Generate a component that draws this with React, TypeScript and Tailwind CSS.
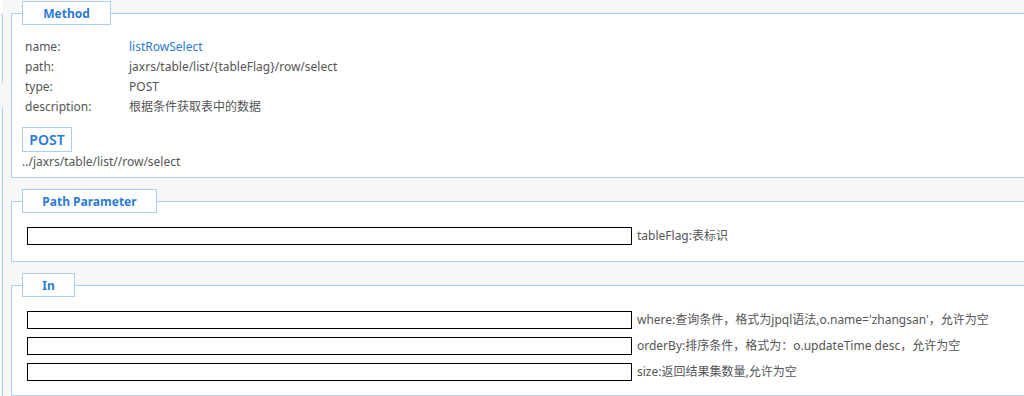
import React from 'react';

const font = { fontFamily: '"Noto Sans", "Noto Sans CJK SC", sans-serif' };

const Legend = ({ title, width }: { title: string; width: string }) => (
  <legend className={`h-[24px] ${width} border border-[#a8d0f5] bg-white`}>
    <div className="pt-[1px] text-center text-[12px] font-bold leading-[21px] text-[#2b7ad6]">{title}</div>
  </legend>
);

const ParamRow = ({ text }: { text: string }) => (
  <div className="flex h-[26px] items-center">
    <div className="h-[18px] w-[605px] shrink-0 border border-black bg-white" />
    <span className="ml-[5px] whitespace-nowrap text-[12px] text-[#555]">{text}</span>
  </div>
);

const rows = [
  { label: 'name:', value: 'listRowSelect', blue: true },
  { label: 'path:', value: 'jaxrs/table/list/{tableFlag}/row/select' },
  { label: 'type:', value: 'POST' },
  { label: 'description:', value: '根据条件获取表中的数据' },
];

export default function App() {
  return (
    <div className="flex h-[396px] w-[1024px] overflow-hidden bg-[#f7f7f7]" style={font}>
      <div className="flex w-[3px] shrink-0 flex-col bg-white">
        <div className="h-[13px] bg-white" />
        <div className="h-[70px] border-r border-[#a8d0f5] bg-[#f7f7f7]" />
        <div className="h-[24px] bg-[#f7f7f7]" />
        <div className="flex-1 border-r border-[#a8d0f5] bg-[#f7f7f7]" />
      </div>
      <div className="ml-[8px] flex w-[1100px] shrink-0 flex-col gap-[11px] pt-[1px]">
        <fieldset className="border border-[#a8d0f5] bg-white px-[10px] pb-[6px]">
          <Legend title="Method" width="w-[89px]" />
          <div className="mt-[12px] pl-[3px]">
            {rows.map((r) => (
              <div key={r.label} className="flex h-[20px] items-center text-[12px]">
                <span className="w-[104px] text-[#555]">{r.label}</span>
                <span className={r.blue ? 'text-[#2b7ad6]' : 'text-[#555]'}>{r.value}</span>
              </div>
            ))}
          </div>
          <div className="mt-[10px] flex h-[25px] w-[50px] items-center justify-center border border-[#a8d0f5] text-[14px] font-semibold text-[#2b7ad6]">
            POST
          </div>
          <div className="flex h-[19px] items-center text-[12px] text-[#555]">../jaxrs/table/list//row/select</div>
        </fieldset>
        <fieldset className="border border-[#a8d0f5] bg-white px-[10px] pb-[12px]">
          <Legend title="Path Parameter" width="w-[135px]" />
          <div className="mt-[10px] pl-[5px]">
            <ParamRow text="tableFlag:表标识" />
          </div>
        </fieldset>
        <fieldset className="flex-1 border border-[#a8d0f5] bg-white px-[10px]">
          <Legend title="In" width="w-[53px]" />
          <div className="mt-[10px] pl-[5px]">
            <ParamRow text="where:查询条件，格式为jpql语法,o.name='zhangsan'，允许为空" />
            <ParamRow text="orderBy:排序条件，格式为：o.updateTime desc，允许为空" />
            <ParamRow text="size:返回结果集数量,允许为空" />
          </div>
        </fieldset>
      </div>
    </div>
  );
}
